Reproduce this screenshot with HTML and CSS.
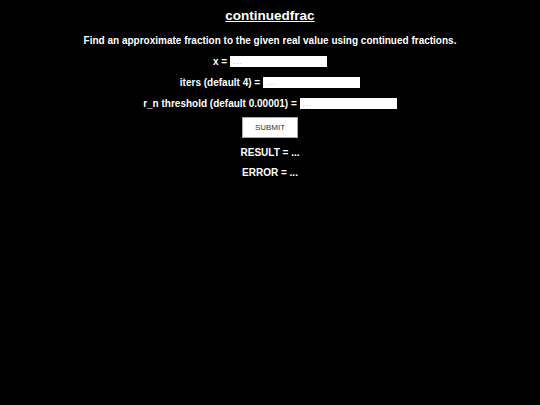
FILE: index.html
```html
<!DOCTYPE html>
<html>
<head>
<meta charset="utf-8">
<link rel="stylesheet" href="styles.css">
</head>
<body>
<div class="page">
  <h1 class="title">continuedfrac</h1>
  <p class="desc">Find an approximate fraction to the given real value using continued fractions.</p>
  <div class="row"><label>x = </label><input class="field" type="text" placeholder="..."></div>
  <div class="row"><label>iters (default 4) = </label><input class="field" type="text" placeholder="..."></div>
  <div class="row"><label>r_n threshold (default 0.00001) = </label><input class="field" type="text" placeholder="..."></div>
  <div class="btnrow"><button class="submit">SUBMIT</button></div>
  <div class="out">RESULT = ...</div>
  <div class="out">ERROR = ...</div>
</div>
</body>
</html>
```
FILE: styles.css
```css
html, body {
  margin: 0;
  padding: 0;
  background: #000;
}
.page {
  display: flex;
  flex-direction: column;
  align-items: center;
  font-family: "Liberation Sans", Arial, sans-serif;
  color: #fff;
  font-weight: bold;
  padding-top: 8px;
}
.title {
  font-size: 13.5px;
  text-decoration: underline;
  margin: 0;
  line-height: 16px;
}
.desc {
  font-size: 10px;
  margin: 10px 0 0 0;
  line-height: 13px;
}
.row {
  display: flex;
  align-items: center;
  font-size: 10px;
  line-height: 13px;
  margin-top: 8px;
}
.field {
  width: 97px;
  height: 11px;
  box-sizing: border-box;
  border: none;
  padding: 0 3px;
  margin: 0 0 0 3px;
  font-family: "Liberation Sans", Arial, sans-serif;
  font-size: 8px;
  background: #fff;
  outline: none;
}
.field::placeholder {
  color: #aaa;
  letter-spacing: 1px;
}
.btnrow {
  margin-top: 7px;
}
.submit {
  width: 56px;
  height: 21px;
  background: #fff;
  border: 1px solid #aaa;
  font-family: "Liberation Sans", Arial, sans-serif;
  font-size: 8px;
  color: #333;
  padding: 0;
  display: block;
}
.out {
  font-size: 10px;
  line-height: 13px;
  margin-top: 8px;
}
.out + .out {
  margin-top: 7px;
}
```
